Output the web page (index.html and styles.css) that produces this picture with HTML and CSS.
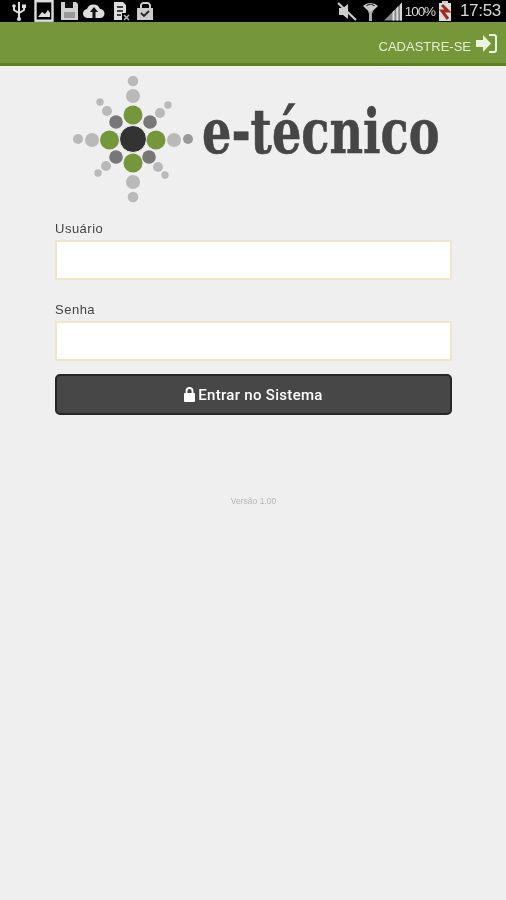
FILE: index.html
```html
<!DOCTYPE html>
<html lang="pt">
<head>
<meta charset="utf-8">
<title>e-técnico</title>
<link rel="stylesheet" href="styles.css">
</head>
<body>
<div class="status">
  <div class="status-left">
    <svg class="ic" width="14" height="20" viewBox="0 0 14 20"><path d="M7 1v17M2 6v3l5 3 5-3V6" fill="none" stroke="#ddd" stroke-width="2"/><circle cx="7" cy="18" r="2" fill="#ddd"/><circle cx="2" cy="5" r="1.800" fill="#ddd"/><rect x="10" y="3.500" width="4" height="3.500" fill="#ddd"/></svg>
    <svg class="ic" width="24" height="22" viewBox="-3 0 24 22"><rect x="1.500" y="1.200" width="17" height="19.500" fill="none" stroke="#ddd" stroke-width="2.400"/><path d="M4 17l4-5 3 2 3-4 2 3v4z" fill="#ddd"/></svg>
    <svg class="ic" width="18" height="20" viewBox="-1 0 18 20"><path d="M0 1h15l2 2v16H0z" fill="#d0d0d0"/><rect x="4" y="1" width="8" height="6" fill="#111"/><rect x="3" y="11" width="11" height="6" fill="#999"/></svg>
    <svg class="ic" width="22" height="16" viewBox="0 0 22 16"><path d="M5 15a4.500 4.500 0 0 1-1-9 7 7 0 0 1 13 0 4.500 4.500 0 0 1 0 9z" fill="#ddd"/><path d="M11 4l-4 5h2.500v6h3V9H15z" fill="#111"/></svg>
    <svg class="ic" width="20" height="20" viewBox="-3 0 20 20"><path d="M1 1h9l3 3v8H9v7H1z" fill="#ddd"/><path d="M4 6h6M4 10h6M4 14h4" stroke="#111" stroke-width="1.600"/><path d="M11 14l5 5M16 14l-5 5" stroke="#bbb" stroke-width="1.500"/></svg>
    <svg class="ic" width="19" height="19" viewBox="-1 0 19 19"><path d="M1 6h16v12H1z" fill="#ccc"/><path d="M5 6V3a3 3 0 0 1 3-2h3a3 3 0 0 1 3 2v3" fill="none" stroke="#ccc" stroke-width="2"/><path d="M5 11l3 3 5-5" fill="none" stroke="#222" stroke-width="1.800"/></svg>
  </div>
  <div class="status-right">
    <svg class="ic" width="20" height="19" viewBox="0 0 20 19"><path d="M2 6h4l5-4v15l-5-4H2z" fill="#ccc"/><path d="M1 1l18 17" stroke="#ccc" stroke-width="2.200"/></svg>
    <svg class="ic" width="17" height="20" viewBox="0 0 17 20"><path d="M1 5a11 11 0 0 1 15 0L8.500 12z" fill="#ccc"/><path d="M4.500 5a6 6 0 0 1 8 0" fill="none" stroke="#333" stroke-width="1.200"/><path d="M6 10h5l-1 3h-3zM7 13h3v7H7z" fill="#aaa"/></svg>
    <svg class="ic" width="18" height="19" viewBox="0 0 19 19"><path d="M0 19 19 0v19z" fill="#888"/><path d="M9 19V10l2-2v11zM13 19V6l2-2v15zM17 19V2l2-2v19z" fill="#ddd"/></svg>
    <span class="pct">100%</span>
    <svg class="ic" width="12" height="20" viewBox="0 0 12 20"><rect x="3" y="0" width="6" height="2" fill="#ccc"/><rect x="0" y="2" width="12" height="18" fill="#ddd"/><path d="M3 4l6 6-6 0 6 8" fill="none" stroke="#a52a1c" stroke-width="3"/></svg>
    <span class="clock">17:53</span>
  </div>
</div>

<header class="topbar">
  <span class="signup">CADASTRE-SE</span>
  <svg class="enter-icon" width="21" height="19" viewBox="0 0 21 19"><path d="M0 6h7V1l8 8.500-8 8.500v-5H0z" fill="#eef3df"/><path d="M13 1h5a2 2 0 0 1 2 2v13a2 2 0 0 1-2 2h-5" fill="none" stroke="#eef3df" stroke-width="2"/></svg>
</header>

<main class="content">
  <div class="logo">
    <svg class="mark" width="130" height="130" viewBox="0 0 130 130">
      <circle cx="65" cy="64" r="13.500" fill="#333" stroke="#f4f4f4" stroke-width="1"/>
      <g fill="#74973a">
        <circle cx="65" cy="40" r="9.500"/><circle cx="65" cy="88" r="9.500"/>
        <circle cx="41.500" cy="65" r="9.500"/><circle cx="88" cy="65" r="9.500"/>
      </g>
      <g fill="#777">
        <circle cx="48" cy="47" r="6.800"/><circle cx="82" cy="47" r="6.800"/>
        <circle cx="48" cy="82" r="6.800"/><circle cx="81" cy="82" r="6.800"/>
      </g>
      <g fill="#b9b9b9">
        <circle cx="65" cy="21" r="7"/><circle cx="65" cy="107" r="7"/>
        <circle cx="24" cy="65" r="7"/><circle cx="106" cy="65" r="7"/>
        <circle cx="65" cy="6" r="5.300"/><circle cx="65" cy="122" r="5.300"/>
        <circle cx="39" cy="36" r="5"/><circle cx="92" cy="38" r="5"/>
        <circle cx="38" cy="91" r="5"/><circle cx="90" cy="92" r="5"/>
        <circle cx="32" cy="27" r="3.700"/><circle cx="100" cy="30" r="3.700"/>
        <circle cx="30" cy="98" r="3.700"/><circle cx="97" cy="100" r="3.700"/>
        <circle cx="10" cy="64" r="5"/>
      </g>
      <circle cx="120" cy="64" r="5" fill="#999"/>
    </svg>
    <span class="brand">e-técnico</span>
  </div>

  <form class="login">
    <label class="label" for="u">Usuário</label>
    <input class="field" id="u" type="text">
    <label class="label second" for="s">Senha</label>
    <input class="field" id="s" type="password">
    <button class="enter" type="button">
      <svg width="11" height="15" viewBox="0 0 11 15"><path d="M2.500 7V4a3 3 0 0 1 6 0v3" fill="none" stroke="#fff" stroke-width="1.800"/><rect x="0" y="6" width="11" height="9" rx="1" fill="#fff"/></svg>
      <span>Entrar no Sistema</span>
    </button>
  </form>
  <p class="version">Versão 1.00</p>
</main>
</body>
</html>
```
FILE: styles.css
```css
* { box-sizing: border-box; }
html, body { margin: 0; padding: 0; }
body {
  width: 506px;
  height: 900px;
  overflow: hidden;
  background: #efefef;
  font-family: "Liberation Sans", Arial, sans-serif;
}
.status {
  height: 22px;
  background: #000;
  display: flex;
  justify-content: space-between;
  align-items: center;
  color: #d8d8d8;
  filter: blur(0.6px);
}
.status-left { display: flex; align-items: center; gap: 5px; padding-left: 12px; }
.status-right { display: flex; align-items: center; gap: 5px; padding-right: 5px; }
.ic { display: block; flex: none; }
.pct { font-size: 13.500px; letter-spacing: -1.100px; margin: 0 -1px 0 -2px; }
.clock { font-size: 17px; margin-left: 4px; letter-spacing: -0.3px; }
.topbar {
  height: 44px;
  background: #76963a;
  border-bottom: 3px solid #5f8021;
  box-shadow: 0 1px 0 #f6f8ee;
  display: flex;
  justify-content: flex-end;
  align-items: center;
  gap: 5px;
  padding: 0 9px 0 0;
  color: #e6eed2;
}
.signup { font-size: 13px; filter: blur(0.4px); margin-top: 7px; }
.enter-icon { display: block; margin-top: 2px; }
.content { padding: 9px 54px 0 55px; }
.logo {
  display: flex;
  align-items: center;
  margin-left: 13px;
  height: 130px;
}
.mark { flex: none; }
.brand {
  font-family: "DejaVu Serif", serif;
  font-weight: 700;
  font-size: 62px;
  line-height: 62px;
  color: #464646;
  margin: -16px 0 0 4px;
  white-space: nowrap;
  transform: scaleX(0.745);
  transform-origin: left center;
  -webkit-text-stroke: 0.6px #464646;
  filter: blur(0.6px);
}
.login { display: flex; flex-direction: column; margin-top: 16px; }
.label {
  font-size: 13px;
  letter-spacing: 0.5px;
  line-height: 16px;
  color: #444;
  margin-bottom: 3px;
  filter: blur(0.4px);
}
.label.second { margin-top: 22px; }
.field {
  height: 40px;
  width: 100%;
  background: #fff;
  border: 2px solid #efe7c6;
  padding: 0;
  outline: none;
}
.enter {
  height: 41px;
  margin-top: 13px;
  background: #474747;
  border: 2px solid #262626;
  border-radius: 5px;
  color: #fff;
  display: flex;
  align-items: center;
  justify-content: center;
  gap: 3px;
  font-family: Roboto, "Liberation Sans", sans-serif;
  font-size: 15px;
  font-weight: 500;
  letter-spacing: 0.3px;
  padding: 0;
}
.enter span { filter: blur(0.4px); }
.version {
  margin: 81px 0 0;
  text-align: center;
  font-size: 8.500px;
  color: #b5b5b5;
  filter: blur(0.5px);
}
```
